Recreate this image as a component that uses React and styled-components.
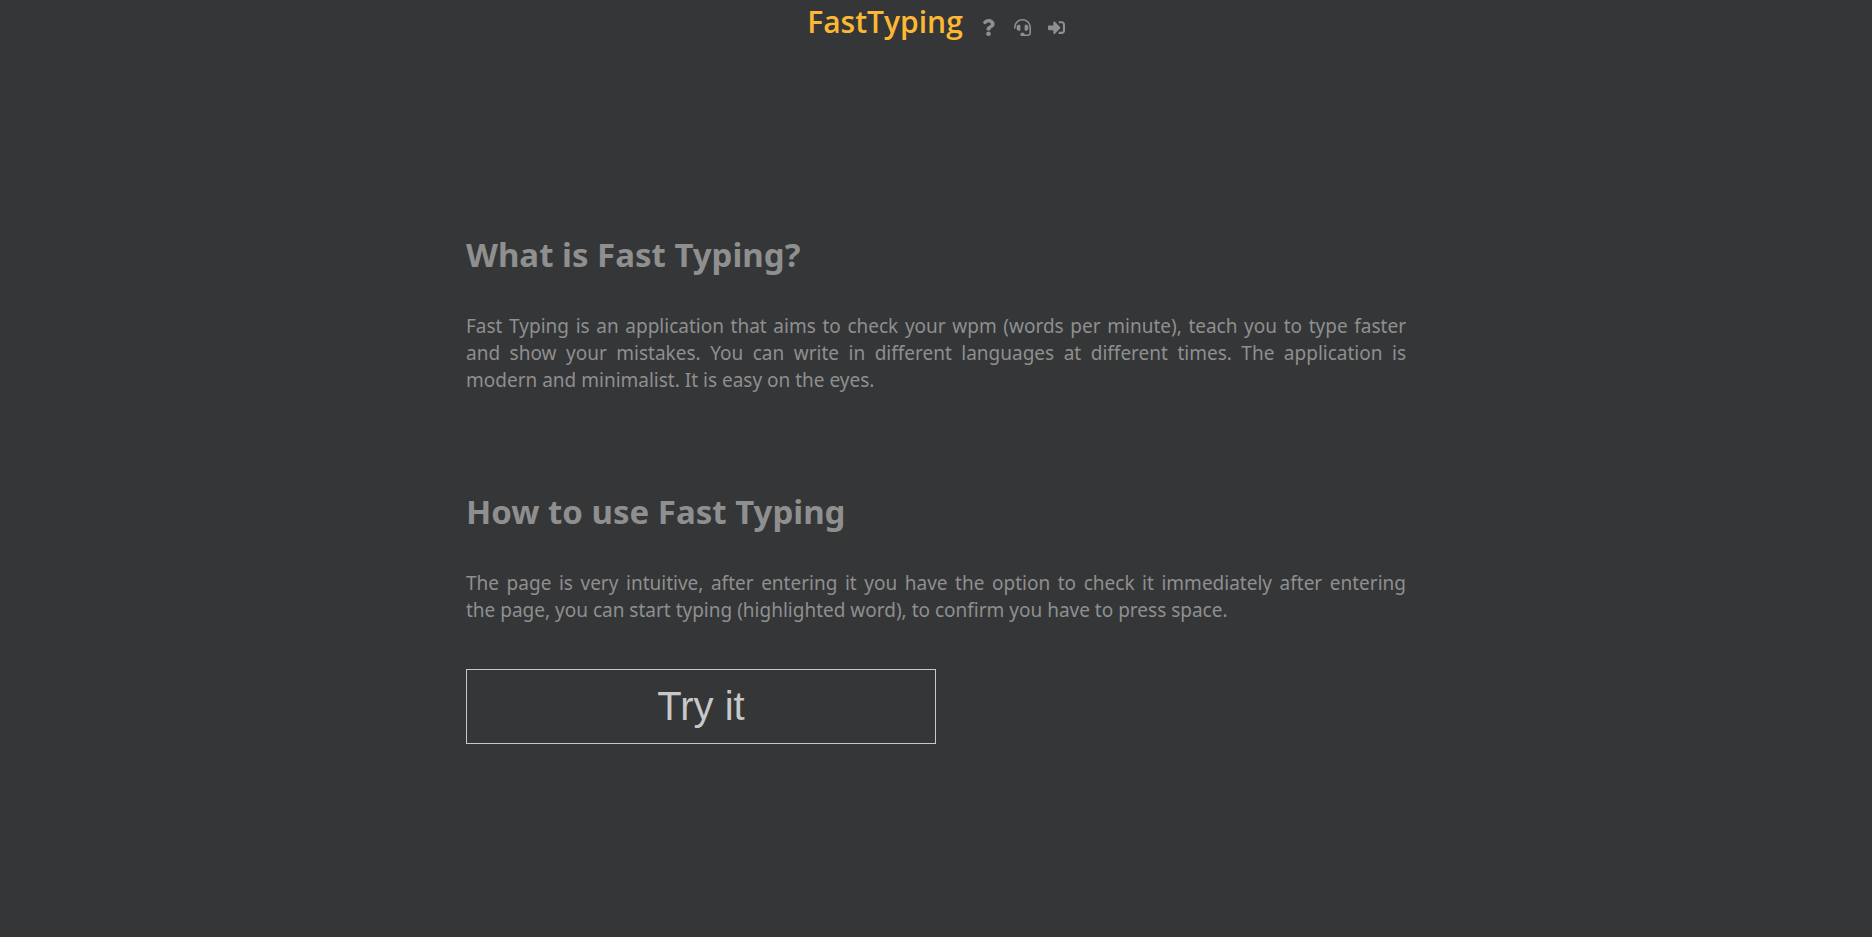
import React from "react";
import styled, { createGlobalStyle } from "styled-components";
import { FaQuestion, FaHeadset, FaSignInAlt } from "react-icons/fa";

const GlobalStyle = createGlobalStyle`
  * { box-sizing: border-box; }
  body {
    margin: 0;
    background: #353638;
    color: #8f8f8f;
    font-family: "Segoe UI", "Noto Sans", "Open Sans", sans-serif;
  }
`;

const Page = styled.div`
  min-height: 100vh;
`;

const Header = styled.header`
  display: flex;
  justify-content: center;
  height: 48px;
`;

const Logo = styled.a`
  color: #fdb833;
  font-family: "Segoe UI", "Open Sans", sans-serif;
  font-size: 30px;
  font-weight: 600;
  line-height: 44px;
  text-decoration: none;
`;

const Nav = styled.nav`
  display: flex;
  align-items: center;
  gap: 17px;
  padding: 8px 0 2px 17px;
`;

const NavLink = styled.a`
  display: flex;
  color: #8f8f8f;

  svg {
    width: auto;
    height: 17px;
  }
`;

const Main = styled.main`
  width: 940px;
  max-width: 100%;
  margin: 0 auto;
  padding: 183px 0 48px;
`;

const Section = styled.section`
  margin-bottom: ${({ $last }) => ($last ? "45px" : "94px")};
`;

const Title = styled.h1`
  margin: 0 0 35px;
  font-size: 33px;
  font-weight: 700;
  line-height: 47px;
`;

const Text = styled.p`
  margin: 0;
  font-size: 19px;
  line-height: 27px;
  text-align: justify;
`;

const TryButton = styled.button`
  width: 50%;
  height: 75px;
  padding: 0;
  border: 1px solid #c8c8c8;
  background: transparent;
  color: #c8c8c8;
  font-family: Arial, "Liberation Sans", sans-serif;
  font-size: 40px;
`;

export default function App() {
  return (
    <Page>
      <GlobalStyle />
      <Header>
        <Logo href="#home">FastTyping</Logo>
        <Nav>
          <NavLink href="#about" aria-label="About"><FaQuestion /></NavLink>
          <NavLink href="#contact" aria-label="Contact"><FaHeadset /></NavLink>
          <NavLink href="#login" aria-label="Log in"><FaSignInAlt /></NavLink>
        </Nav>
      </Header>
      <Main>
        <Section>
          <Title>What is Fast Typing?</Title>
          <Text>
            Fast Typing is an application that aims to check your wpm (words per minute), teach you to
            type faster and show your mistakes. You can write in different languages at different
            times. The application is modern and minimalist. It is easy on the eyes.
          </Text>
        </Section>
        <Section $last>
          <Title as="h2">How to use Fast Typing</Title>
          <Text>
            The page is very intuitive, after entering it you have the option to check it immediately
            after entering the&nbsp;page, you can start typing (highlighted word), to confirm you have
            to press space.
          </Text>
        </Section>
        <TryButton type="button">Try it</TryButton>
      </Main>
    </Page>
  );
}
